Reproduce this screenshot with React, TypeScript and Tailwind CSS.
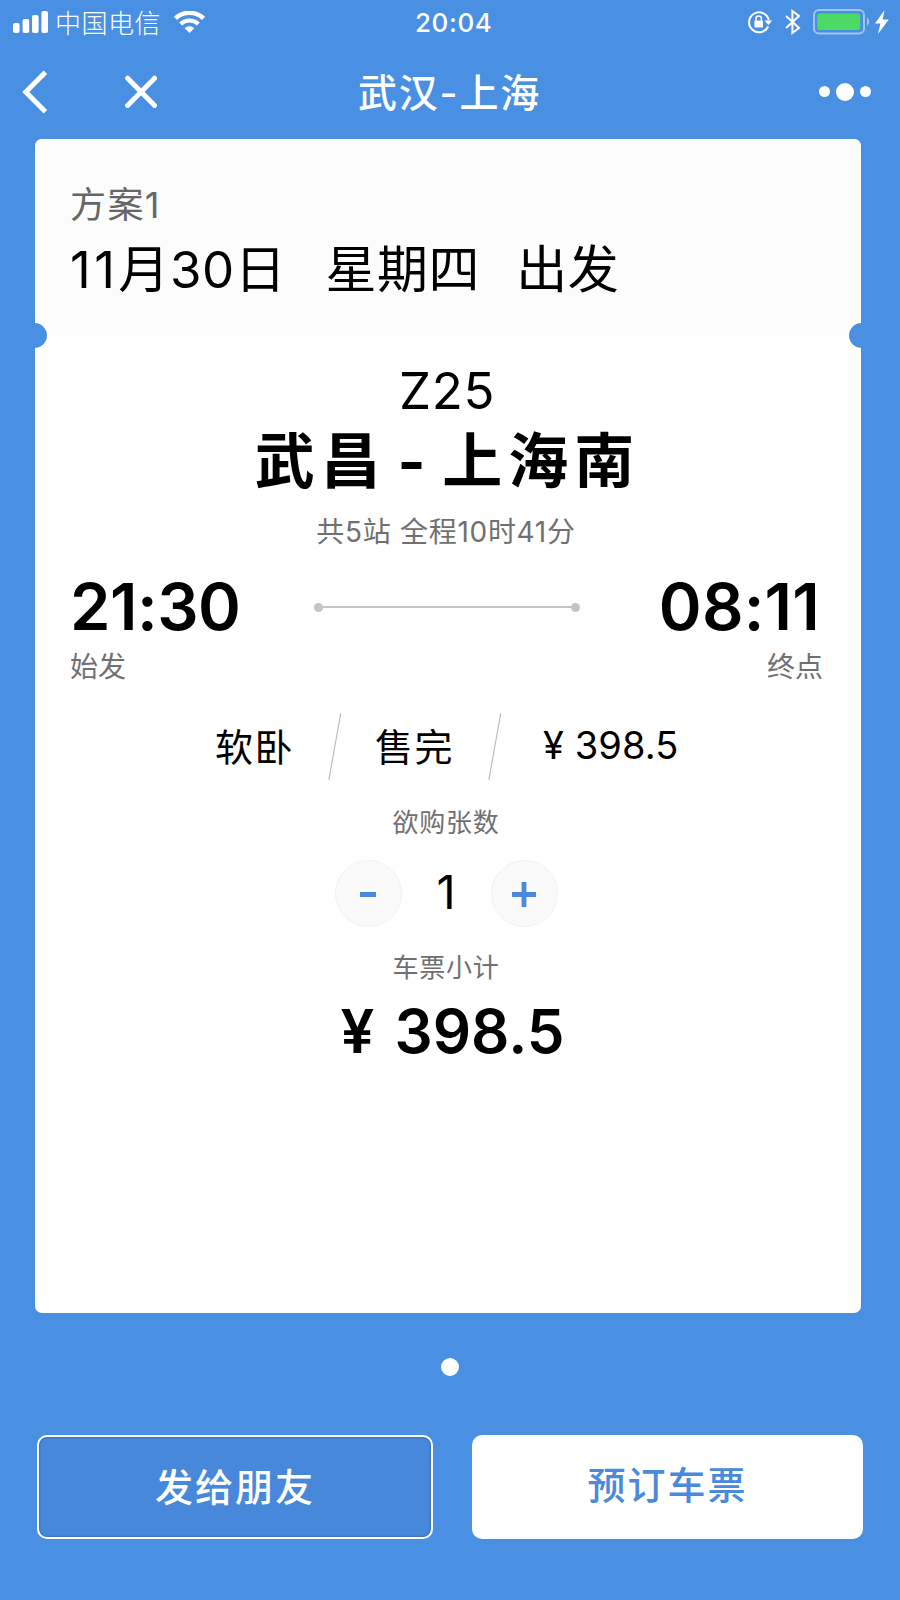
import { useState } from "react";

const PRICE = 398.5;

function StatusBar() {
  return (
    <div className="flex h-11 items-center text-white">
      <div className="flex w-[415px] items-center pl-[13px]">
        <svg width="36" height="22" viewBox="0 0 36 22" fill="currentColor">
          <rect x="0" y="12" width="6.6" height="10" rx="2" />
          <rect x="9.6" y="8" width="6.6" height="14" rx="2" />
          <rect x="19" y="4" width="6.6" height="18" rx="2" />
          <rect x="28.4" y="0" width="6.6" height="22" rx="2" />
        </svg>
        <span className="ml-[6px] pt-[3px] text-[26px] leading-[41px] font-light tracking-[0.5px]">中国电信</span>
        <svg className="ml-[13px]" width="31" height="22" viewBox="0 0 30 22" preserveAspectRatio="none" fill="none" stroke="currentColor">
          <path d="M1.4 7.4a19.4 19.4 0 0 1 27.2 0" strokeWidth="4.4" />
          <path d="M6.4 13a12.4 12.4 0 0 1 17.2 0" strokeWidth="4" />
          <path d="M15 22l-4.8-4.8a7 7 0 0 1 9.6 0z" fill="currentColor" stroke="none" />
        </svg>
      </div>
      <span className="pt-[2px] text-[26px] leading-[42px] font-medium tracking-[0.6px]">20:04</span>
      <div className="ml-auto flex items-center pr-[11px]">
        <svg width="26" height="24" viewBox="0 0 26 24" fill="none" stroke="currentColor">
          <path d="M21.2 16.4a10 10 0 1 1 .6-6.4" strokeWidth="2" />
          <path d="M17.6 10.4h7.6l-3.8 4.6z" fill="currentColor" stroke="none" />
          <rect x="7.4" y="10.6" width="8.6" height="7" rx="0.8" fill="currentColor" stroke="none" />
          <path d="M9 11V8.6a2.7 2.7 0 0 1 5.4 0V11" strokeWidth="1.5" />
        </svg>
        <svg className="ml-[12px]" width="16" height="26" viewBox="0 0 16 26" fill="none" stroke="currentColor" strokeWidth="2">
          <path d="M1 7l13 12-6.6 5V2L14 7 1 19" />
        </svg>
        <svg className="ml-[12px]" width="58" height="26" viewBox="0 0 58 26" fill="none">
          <rect x="1" y="1" width="50" height="23.4" rx="5" stroke="#a0c5f1" strokeWidth="2" />
          <rect x="4.2" y="4.6" width="43" height="16.4" rx="2.6" fill="#4cd964" />
          <path d="M54 8.6a5 5 0 0 1 0 8.4z" fill="#a0c5f1" />
        </svg>
        <svg className="ml-[4px]" width="14" height="24" viewBox="0 0 14 24" fill="currentColor">
          <path d="M9.6 0L0 13.6h5.4L3 24 13.8 9.6H7.6z" />
        </svg>
      </div>
    </div>
  );
}

function NavBar({ title }: { title: string }) {
  return (
    <div className="flex h-[95px] items-center text-white">
      <div className="flex w-[358px] items-center pl-[22px]">
        <svg width="26" height="44" viewBox="0 0 26 44" fill="none" stroke="currentColor" strokeWidth="5">
          <path d="M23.4 2.2L3.8 22l19.6 19.8" />
        </svg>
        <svg className="ml-[77px]" width="32" height="34" viewBox="0 0 32 34" fill="none" stroke="currentColor" strokeWidth="5" strokeLinecap="round">
          <path d="M2.6 3.2l27 27.2M29.6 3.2l-27 27.2" />
        </svg>
      </div>
      <h1 className="pt-[2px] text-[39px] leading-[60px] font-medium tracking-[1.8px]">{title}</h1>
      <div className="ml-auto flex items-center gap-[6px] pr-[29px]">
        <span className="size-[11px] rounded-full bg-white" />
        <span className="size-[18px] rounded-full bg-white" />
        <span className="size-[11px] rounded-full bg-white" />
      </div>
    </div>
  );
}

function Slash() {
  return (
    <svg width="14" height="67" viewBox="0 0 14 67" stroke="#bdbdbd" strokeWidth="1.2">
      <path d="M12.8 0L0.8 67" />
    </svg>
  );
}

export default function App() {
  const [count, setCount] = useState(1);

  return (
    <main
      lang="zh-CN"
      className="flex h-[1600px] w-[900px] flex-col overflow-hidden bg-[#4990e2] font-['Inter','Noto_Sans_CJK_SC',sans-serif] whitespace-nowrap text-black"
    >
      <StatusBar />
      <NavBar title="武汉-上海" />

      <section className="relative ml-[35px] h-[1174px] w-[826px] overflow-hidden rounded-[7px] bg-white">
        <span className="absolute top-[184px] -left-[13px] size-[25px] rounded-full bg-[#4990e2]" />
        <span className="absolute top-[184px] -right-[13px] size-[25px] rounded-full bg-[#4990e2]" />

        <header className="h-[197px] bg-[#fcfcfc] px-[35px] pt-[41px]">
          <p className="text-[36px] leading-[50px] tracking-[1.4px] text-[#666]">方案1</p>
          <p className="mt-[10px] flex text-[51px] leading-[60px] tracking-[0.6px]">
            <span><span className="tracking-[3.4px]">11</span>月30日</span>
            <span className="ml-[39px]">星期四</span>
            <span className="ml-[36px]">出发</span>
          </p>
        </header>

        <div className="flex flex-col items-center pt-[25px] pr-[39px] pl-[35px]">
          <p className="pl-[2px] text-[51px] leading-[60px] tracking-[0.6px]">Z25</p>
          <h2 className="mt-[2px] ml-[3px] text-[60px] leading-[77px] font-bold tracking-[6px] [word-spacing:-9.5px]">武昌 - 上海南</h2>
          <p className="mt-3 text-[28px] leading-10 tracking-[0.7px] text-[#707070]">共5站 全程10时41分</p>

          <div className="mt-[15px] flex w-full items-center text-[65px] leading-[80px] font-semibold">
            <span className="w-[244px] tracking-[-0.5px]">21:30</span>
            <div className="flex w-[266px] items-center">
              <span className="size-[9px] rounded-full bg-[#c4c4c4]" />
              <span className="h-[2px] flex-1 bg-[#c4c4c4]" />
              <span className="size-[9px] rounded-full bg-[#c4c4c4]" />
            </div>
            <span className="mr-[2px] ml-auto tracking-[0.2px]">08:11</span>
          </div>
          <div className="flex w-full justify-between text-[28px] leading-10 text-[#707070]">
            <span>始发</span>
            <span className="-mr-px">终点</span>
          </div>

          <div className="mt-[26px] flex w-full items-center pl-[145px] text-[38px] leading-[66px]">
            <span className="w-[113px] tracking-[1.5px]">软卧</span>
            <Slash />
            <span className="ml-[33px] w-[113px] tracking-[1.5px]">售完</span>
            <Slash />
            <span className="ml-[41px] pb-[3px] leading-[63px] tracking-[0.1px]">¥ {PRICE}</span>
          </div>

          <p className="mt-[23px] text-[26px] leading-10 tracking-[0.8px] text-[#707070]">欲购张数</p>
          <div className="mt-[17px] flex h-[67px] w-[223px] items-center justify-between">
            <button
              aria-label="减少"
              onClick={() => setCount((c) => Math.max(1, c - 1))}
              className="flex size-[67px] items-center justify-center rounded-full border border-[#f2f2f2] bg-[#fafafa]"
            >
              <span className="mt-[2px] h-[5px] w-4 bg-[#4a89dc]" />
            </button>
            <span className="pb-[3px] text-[47px] leading-[64px]">{count}</span>
            <button
              aria-label="增加"
              onClick={() => setCount((c) => c + 1)}
              className="flex size-[67px] items-center justify-center rounded-full border border-[#f2f2f2] bg-[#fafafa]"
            >
              <svg className="mt-[2px]" width="24" height="25" viewBox="0 0 24 25" stroke="#4a89dc" strokeWidth="4.8">
                <path d="M0 12.5h24M12 0v25" />
              </svg>
            </button>
          </div>

          <p className="mt-[21px] text-[26px] leading-10 tracking-[0.8px] text-[#707070]">车票小计</p>
          <p className="mt-[3px] pl-[13px] text-[60px] leading-[80px] font-semibold">
            <span className="tracking-[5px]">¥</span> {PRICE * count}
          </p>
        </div>
      </section>

      <div className="mt-[45px] flex justify-center">
        <span className="size-[18px] rounded-full bg-white" />
      </div>

      <div className="mt-[59px] flex gap-[39px] pl-[37px] text-[38px] font-medium tracking-[2px]">
        <button className="h-[104px] w-[396px] rounded-[10px] border-2 border-white bg-[#4888da] text-white shadow-[inset_0_0_2px_1px_#3f6fb0]">
          发给朋友
        </button>
        <button className="h-[104px] w-[391px] rounded-[10px] bg-white pb-[3px] text-[#4a89dc]">预订车票</button>
      </div>
    </main>
  );
}
